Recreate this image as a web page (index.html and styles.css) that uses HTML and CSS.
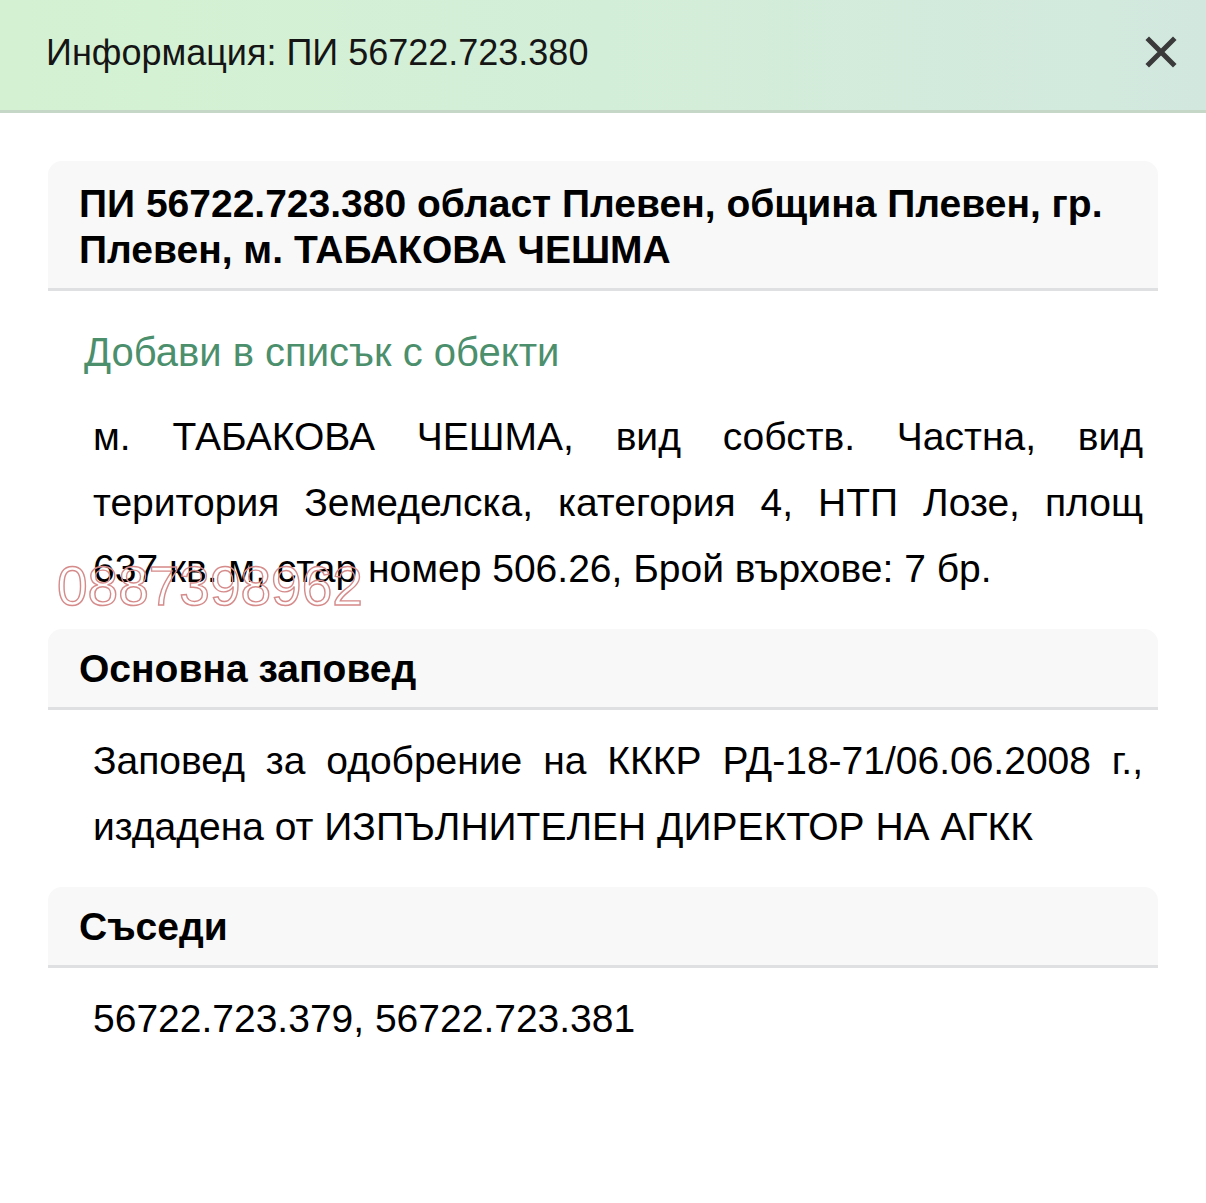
FILE: index.html
```html
<!DOCTYPE html>
<html lang="bg">
<head>
<meta charset="utf-8">
<title>Информация</title>
<link rel="stylesheet" href="styles.css">
</head>
<body>
<div class="topbar">
  <div class="title">Информация: ПИ 56722.723.380</div>
  <button class="close" aria-label="Затвори">
    <svg width="34" height="34" viewBox="0 0 34 34"><path d="M5 5 L29 29 M29 5 L5 29" stroke="#3a3a3a" stroke-width="5" stroke-linecap="square" fill="none"/></svg>
  </button>
</div>
<main class="content">
  <section class="card">
    <h2 class="card-head first">ПИ 56722.723.380 област Плевен, община Плевен, гр. Плевен, м. ТАБАКОВА ЧЕШМА</h2>
    <a class="add-link" href="#">Добави в списък с обекти</a>
    <div class="text-wrap">
      <p class="text">м. ТАБАКОВА ЧЕШМА, вид собств. Частна, вид територия Земеделска, категория 4, НТП Лозе, площ 637&nbsp;кв.&nbsp;м, стар номер 506.26, Брой върхове: 7 бр.</p>
      <span class="watermark">0887398962</span>
    </div>
  </section>
  <section class="card">
    <h2 class="card-head">Основна заповед</h2>
    <p class="text">Заповед за одобрение на КККР РД-18-71/06.06.2008 г., издадена от ИЗПЪЛНИТЕЛЕН ДИРЕКТОР НА АГКК</p>
  </section>
  <section class="card">
    <h2 class="card-head">Съседи</h2>
    <p class="text">56722.723.379, 56722.723.381</p>
  </section>
</main>
</body>
</html>
```
FILE: styles.css
```css
html, body {
  margin: 0;
  padding: 0;
  background: #ffffff;
}
body {
  font-family: "Liberation Sans", Arial, sans-serif;
  color: #000;
}
.topbar {
  box-sizing: border-box;
  height: 113px;
  border-bottom: 3px solid #c5d8c8;
  background: linear-gradient(90deg, #d4f2d2 0%, #d3eed8 50%, #d2e8df 100%);
  display: flex;
  align-items: center;
  justify-content: space-between;
  padding: 0 28px 0 46px;
}
.title {
  font-size: 36px;
  line-height: 40px;
  color: #151515;
  margin-top: -5px;
}
.close {
  background: none;
  border: 0;
  padding: 0;
  width: 34px;
  height: 34px;
  margin-top: -6px;
  display: flex;
}
.content {
  padding: 48px 48px 0 48px;
  display: flex;
  flex-direction: column;
}
.card {
  display: flex;
  flex-direction: column;
}
.card-head {
  margin: 0;
  background: #f8f8f8;
  border-radius: 14px 14px 0 0;
  border-bottom: 3px solid #dfe0e1;
  font-size: 39px;
  font-weight: bold;
  line-height: 46px;
  padding: 17px 31px 15px 31px;
}
.card-head.first {
  padding: 20px 31px 15px 31px;
}
.add-link {
  color: #4b8f6d;
  text-decoration: none;
  font-size: 40px;
  line-height: 44px;
  margin: 39px 0 0 36px;
}
.text-wrap {
  position: relative;
}
.text {
  margin: 0;
  font-size: 39px;
  line-height: 66px;
  text-align: justify;
  padding: 18px 15px 27px 45px;
}
.text-wrap .text {
  padding-top: 30px;
}
.watermark {
  position: absolute;
  left: 9px;
  top: 185px;
  font-size: 55px;
  line-height: 55px;
  color: transparent;
  -webkit-text-stroke: 1.4px #d68b8b;
}
```
